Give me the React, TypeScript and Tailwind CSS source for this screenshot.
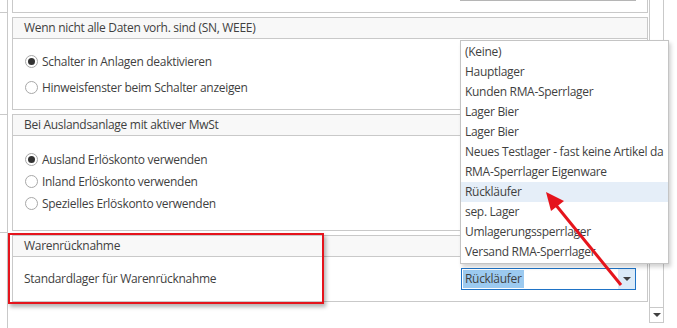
import type { ReactNode } from "react";

const items = [
  "(Keine)",
  "Hauptlager",
  "Kunden RMA-Sperrlager",
  "Lager Bier",
  "Lager Bier",
  "Neues Testlager - fast keine Artikel da",
  "RMA-Sperrlager Eigenware",
  "Rückläufer",
  "sep. Lager",
  "Umlagerungssperrlager",
  "Versand RMA-Sperrlager",
];

function Radio({ checked, label }: { checked?: boolean; label: string }) {
  return (
    <label className="flex items-center gap-[4px]">
      <span className="flex h-[13px] w-[13px] items-center justify-center rounded-full border border-[#a8a8a8] bg-white">
        {checked ? (
          <span className="h-[7px] w-[7px] rounded-full bg-[#333333]" />
        ) : null}
      </span>
      <span>{label}</span>
    </label>
  );
}

function GroupBox({
  title,
  className,
  children,
}: {
  title: string;
  className: string;
  children: ReactNode;
}) {
  return (
    <section className={["border border-[#c9c9c9] bg-white", className].join(" ")}>
      <div className="flex h-[21px] items-center border-b border-[#c9c9c9] bg-[#f8f8f8] pl-[11px]">
        {title}
      </div>
      {children}
    </section>
  );
}

export default function App() {
  return (
    <div
      className="relative flex h-[328px] w-[677px] overflow-hidden bg-white text-[12px] leading-none tracking-[-0.3px] text-[#3f3f3f]"
      style={{ fontFamily: '"Open Sans", "Noto Sans", sans-serif' }}
    >
      {/* left strip */}
      <div className="flex w-[8px] flex-col border-r border-[#c9c9c9]">
        <div className="h-[13px] border-b border-[#c9c9c9]" />
        <div className="h-[102px] border-b border-[#c9c9c9]" />
        <div className="h-[118px] border-b border-[#c9c9c9]" />
      </div>

      {/* main column */}
      <div className="ml-[4px] flex w-[636px] flex-col gap-[4px]">
        <div className="h-[13px] border-x border-b border-[#c9c9c9]">
          <div className="ml-[447px] h-px w-[176px] bg-[#b5b5b5]" />
        </div>

        <GroupBox title="Wenn nicht alle Daten vorh. sind (SN, WEEE)" className="h-[93px]">
          <div className="flex flex-col gap-[13px] pl-[12px] pt-[16px]">
            <Radio checked label="Schalter in Anlagen deaktivieren" />
            <Radio label="Hinweisfenster beim Schalter anzeigen" />
          </div>
        </GroupBox>

        <GroupBox title="Bei Auslandsanlage mit aktiver MwSt" className="h-[117px]">
          <div className="flex flex-col gap-[9px] pl-[12px] pt-[17px]">
            <Radio checked label="Ausland Erlöskonto verwenden" />
            <Radio label="Inland Erlöskonto verwenden" />
            <Radio label="Spezielles Erlöskonto verwenden" />
          </div>
        </GroupBox>

        <GroupBox title="Warenrücknahme" className="h-[67px]">
          <div className="flex h-[44px] items-center pl-[11px] pr-[11px]">
            <span className="flex-1">Standardlager für Warenrücknahme</span>
            <div className="flex h-[22px] w-[175px] items-center border border-[#1f73c6] bg-white">
              <span className="ml-px flex h-[18px] items-center bg-[#9ccaf0] px-[2px]">
                Rückläufer
              </span>
              <span className="ml-auto flex h-full w-[17px] items-center justify-center bg-[#dcebf8]">
                <span className="h-0 w-0 border-x-[4px] border-t-[4px] border-x-transparent border-t-[#404040]" />
              </span>
            </div>
          </div>
        </GroupBox>
      </div>

      {/* scrollbar */}
      <div className="ml-[1px] flex h-[323px] w-[15px] flex-col justify-end border-x border-b border-[#c9c9c9]">
        <div className="flex h-[15px] items-center justify-center border-t border-[#c9c9c9]">
          <span className="h-0 w-0 border-x-[4px] border-t-[4px] border-x-transparent border-t-[#404040]" />
        </div>
      </div>

      {/* dropdown list */}
      <ul className="absolute left-[460px] top-[40px] w-[209px] border border-[#c4c4c4] bg-white py-px shadow-[2px_3px_4px_rgba(0,0,0,0.18)]">
        {items.map((item, i) => (
          <li
            key={i}
            className={[
              "flex h-[20px] items-center whitespace-nowrap pl-[4px]",
              item === "Rückläufer" ? "bg-[#e5eef8]" : "",
            ].join(" ")}
          >
            {item}
          </li>
        ))}
      </ul>

      {/* red highlight */}
      <div className="absolute left-[8px] top-[233px] h-[71px] w-[316px] border-2 border-[#e5141c] shadow-[2px_3px_4px_rgba(0,0,0,0.3)]" />

      {/* red arrow */}
      <svg className="absolute left-0 top-0" width="677" height="328" viewBox="0 0 677 328">
        <line x1="621" y1="285" x2="555" y2="204" stroke="#e5141c" strokeWidth="3" />
        <polygon points="546,192 551,211 564,201" fill="#e5141c" />
      </svg>
    </div>
  );
}
